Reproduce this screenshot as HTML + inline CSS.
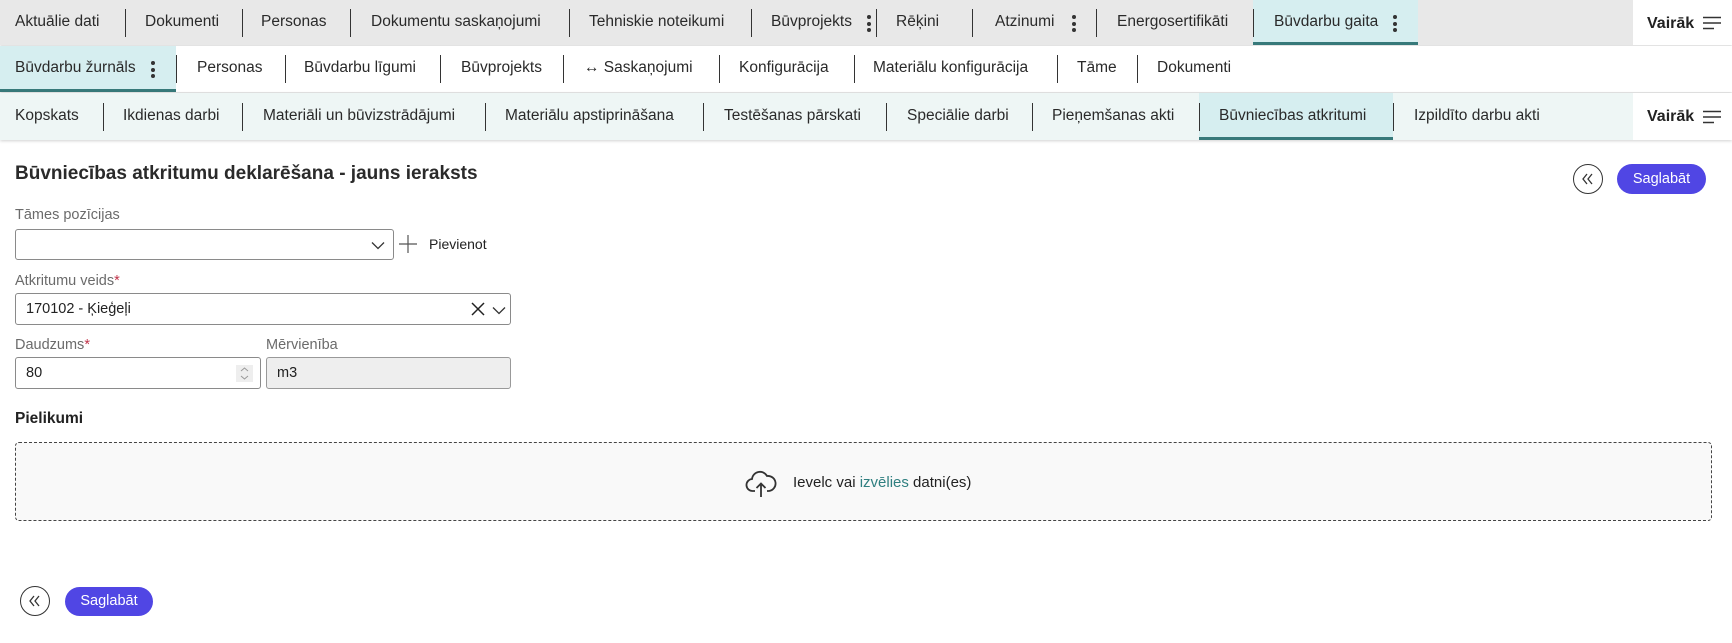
<!DOCTYPE html>
<html><head><meta charset="utf-8"><style>
*{box-sizing:border-box;margin:0;padding:0}
body{width:1732px;height:643px;position:relative;background:#fff;font-family:"Liberation Sans",Arial,sans-serif;color:#222;overflow:hidden}
.row{position:absolute;left:0;width:1732px}
.t{position:absolute;font-size:15.5px;color:#2a2a2a;white-space:nowrap;transform:translateY(-50%)}
.s{position:absolute;width:1px;background:#333}
.k{position:absolute;width:4px}
.k i{display:block;width:4px;height:4px;border-radius:50%;background:#333;margin-bottom:2.5px}
.act{position:absolute;background:#d6eef0;border-bottom:3px solid #37797a}
.more{position:absolute;background:#fff;font-weight:bold;font-size:16px}
.lbl{position:absolute;font-size:14.5px;color:#6b6b6b}
.box{position:absolute;border:1px solid #8a8a8a;border-radius:3px;background:#fff}
.btn{position:absolute;background:#5046e4;color:#fff;border-radius:15px;font-size:14.5px;text-align:center}
.circ{position:absolute;border:1.3px solid #333;border-radius:50%}
</style></head><body>
<!-- row1 -->
<div class="row" style="top:0;height:45px;background:#e8e8e8;box-shadow:0 1px 2px rgba(0,0,0,.15)">
<div class="act" style="left:1253px;width:165px;top:0;height:45px"></div>
<div class="t" style="left:15px;top:22px">Aktuālie dati</div>
<div class="s" style="left:125px;top:9px;height:28px"></div>
<div class="t" style="left:145px;top:22px">Dokumenti</div>
<div class="s" style="left:242px;top:9px;height:28px"></div>
<div class="t" style="left:261px;top:22px">Personas</div>
<div class="s" style="left:350px;top:9px;height:28px"></div>
<div class="t" style="left:371px;top:22px">Dokumentu saskaņojumi</div>
<div class="s" style="left:569px;top:9px;height:28px"></div>
<div class="t" style="left:589px;top:22px">Tehniskie noteikumi</div>
<div class="s" style="left:751px;top:9px;height:28px"></div>
<div class="t" style="left:771px;top:22px">Būvprojekts</div>
<div class="k" style="left:867px;top:15px"><i></i><i></i><i></i></div>
<div class="s" style="left:876px;top:9px;height:28px"></div>
<div class="t" style="left:896px;top:22px">Rēķini</div>
<div class="s" style="left:972px;top:9px;height:28px"></div>
<div class="t" style="left:995px;top:22px">Atzinumi</div>
<div class="k" style="left:1072px;top:15px"><i></i><i></i><i></i></div>
<div class="s" style="left:1096px;top:9px;height:28px"></div>
<div class="t" style="left:1117px;top:22px">Energosertifikāti</div>
<div class="s" style="left:1253px;top:9px;height:28px"></div>
<div class="t" style="left:1274px;top:22px">Būvdarbu gaita</div>
<div class="k" style="left:1393px;top:15px"><i></i><i></i><i></i></div>
<div class="more" style="left:1633px;top:0;width:99px;height:45px"><span style="position:absolute;left:14px;top:15px">Vairāk</span>
<svg style="position:absolute;left:70px;top:16px" width="20" height="14"><path d="M0 1.5H18M0 7H18M0 12.5H11" stroke="#333" stroke-width="1.6"/></svg></div>
</div>
<!-- row2 -->
<div class="row" style="top:46px;height:46px;background:#fff;box-shadow:0 1px 2px rgba(0,0,0,.15)">
<div class="act" style="left:0;width:176px;top:0;height:46px"></div>
<div class="t" style="left:15px;top:22px">Būvdarbu žurnāls</div>
<div class="k" style="left:151px;top:15px"><i></i><i></i><i></i></div>
<div class="s" style="left:176px;top:9px;height:28px"></div>
<div class="t" style="left:197px;top:22px">Personas</div>
<div class="s" style="left:285px;top:9px;height:28px"></div>
<div class="t" style="left:304px;top:22px">Būvdarbu līgumi</div>
<div class="s" style="left:440px;top:9px;height:28px"></div>
<div class="t" style="left:461px;top:22px">Būvprojekts</div>
<div class="s" style="left:563px;top:9px;height:28px"></div>
<div class="t" style="left:584px;top:22px">↔ Saskaņojumi</div>
<div class="s" style="left:719px;top:9px;height:28px"></div>
<div class="t" style="left:739px;top:22px">Konfigurācija</div>
<div class="s" style="left:854px;top:9px;height:28px"></div>
<div class="t" style="left:873px;top:22px">Materiālu konfigurācija</div>
<div class="s" style="left:1057px;top:9px;height:28px"></div>
<div class="t" style="left:1077px;top:22px">Tāme</div>
<div class="s" style="left:1137px;top:9px;height:28px"></div>
<div class="t" style="left:1157px;top:22px">Dokumenti</div>
</div>
<!-- row3 -->
<div class="row" style="top:93px;height:47px;background:#eef6f5;box-shadow:0 1px 3px rgba(0,0,0,.18)">
<div class="act" style="left:1199px;width:194px;top:0;height:47px"></div>
<div class="t" style="left:15px;top:23px">Kopskats</div>
<div class="s" style="left:103px;top:10px;height:28px"></div>
<div class="t" style="left:123px;top:23px">Ikdienas darbi</div>
<div class="s" style="left:242px;top:10px;height:28px"></div>
<div class="t" style="left:263px;top:23px">Materiāli un būvizstrādājumi</div>
<div class="s" style="left:485px;top:10px;height:28px"></div>
<div class="t" style="left:505px;top:23px">Materiālu apstiprināšana</div>
<div class="s" style="left:703px;top:10px;height:28px"></div>
<div class="t" style="left:724px;top:23px">Testēšanas pārskati</div>
<div class="s" style="left:886px;top:10px;height:28px"></div>
<div class="t" style="left:907px;top:23px">Speciālie darbi</div>
<div class="s" style="left:1032px;top:10px;height:28px"></div>
<div class="t" style="left:1052px;top:23px">Pieņemšanas akti</div>
<div class="s" style="left:1199px;top:10px;height:28px"></div>
<div class="t" style="left:1219px;top:23px">Būvniecības atkritumi</div>
<div class="s" style="left:1393px;top:10px;height:28px"></div>
<div class="t" style="left:1414px;top:23px">Izpildīto darbu akti</div>
<div class="more" style="left:1633px;top:0;width:99px;height:47px"><span style="position:absolute;left:14px;top:15px">Vairāk</span>
<svg style="position:absolute;left:70px;top:17px" width="20" height="14"><path d="M0 1.5H18M0 7H18M0 12.5H11" stroke="#333" stroke-width="1.6"/></svg></div>
</div>

<div style="position:absolute;left:15px;top:163px;font-size:19px;font-weight:bold;color:#2a2a2a">Būvniecības atkritumu deklarēšana - jauns ieraksts</div>
<div class="circ" style="left:1573px;top:164px;width:30px;height:30px"><svg width="28" height="28" style="position:absolute;left:0;top:0"><path d="M13 9L9 14L13 19M18 9L14 14L18 19" fill="none" stroke="#333" stroke-width="1.3"/></svg></div>
<div class="btn" style="left:1617px;top:164px;width:89px;height:30px;line-height:30px">Saglabāt</div>

<div class="lbl" style="left:15px;top:207px">Tāmes pozīcijas</div>
<div class="box" style="left:15px;top:229px;width:379px;height:31px"><svg style="position:absolute;right:8px;top:11px" width="14" height="9"><path d="M1 1.5L7 7.5L13 1.5" fill="none" stroke="#333" stroke-width="1.3"/></svg></div>
<svg style="position:absolute;left:399px;top:235px" width="18" height="18"><path d="M9 0V18M0 9H18" stroke="#555" stroke-width="1.2"/></svg>
<div style="position:absolute;left:429px;top:236px;font-size:14px">Pievienot</div>

<div class="lbl" style="left:15px;top:273px">Atkritumu veids<span style="color:#c0344a">*</span></div>
<div class="box" style="left:15px;top:293px;width:496px;height:32px"><span style="position:absolute;left:10px;top:7px;font-size:14.5px">170102 - Ķieģeļi</span>
<svg style="position:absolute;left:455px;top:8px" width="14" height="14"><path d="M1 1L13 13M13 1L1 13" stroke="#222" stroke-width="1.5"/></svg>
<svg style="position:absolute;left:476px;top:12px" width="14" height="9"><path d="M1 1.5L7 7.5L13 1.5" fill="none" stroke="#333" stroke-width="1.3"/></svg></div>

<div class="lbl" style="left:15px;top:337px">Daudzums<span style="color:#c0344a">*</span></div>
<div class="lbl" style="left:266px;top:337px">Mērvienība</div>
<div class="box" style="left:15px;top:357px;width:246px;height:32px"><span style="position:absolute;left:10px;top:7px;font-size:14.5px">80</span>
<svg style="position:absolute;left:220px;top:7px" width="17" height="17"><rect width="17" height="17" fill="#eee"/><path d="M5 6L8.5 3L12 6M5 11L8.5 14L12 11" fill="none" stroke="#999" stroke-width="1"/></svg></div>
<div class="box" style="left:266px;top:357px;width:245px;height:32px;background:#eee;border-color:#999"><span style="position:absolute;left:10px;top:7px;font-size:14.5px">m3</span></div>

<div style="position:absolute;left:15px;top:410px;font-size:15.5px;font-weight:bold">Pielikumi</div>
<div style="position:absolute;left:15px;top:442px;width:1697px;height:79px;border:1px dashed #444;border-radius:4px;background:#f9f9f9"></div>
<svg style="position:absolute;left:745px;top:468px" width="32" height="30" viewBox="0 0 32 30"><path d="M10 23H8A6 6 0 0 1 7 11A8 8 0 0 1 22 8A7 7 0 0 1 24 23H22" fill="none" stroke="#333" stroke-width="1.8"/><path d="M16 29V16M11.5 20L16 15.5L20.5 20" fill="none" stroke="#333" stroke-width="1.8"/></svg>
<div style="position:absolute;left:793px;top:474px;font-size:15px">Ievelc vai <span style="color:#2f7f80">izvēlies</span> datni(es)</div>

<div class="circ" style="left:20px;top:586px;width:30px;height:30px"><svg width="28" height="28" style="position:absolute;left:0;top:0"><path d="M13 9L9 14L13 19M18 9L14 14L18 19" fill="none" stroke="#333" stroke-width="1.3"/></svg></div>
<div class="btn" style="left:65px;top:587px;width:88px;height:29px;line-height:29px">Saglabāt</div>
</body></html>
